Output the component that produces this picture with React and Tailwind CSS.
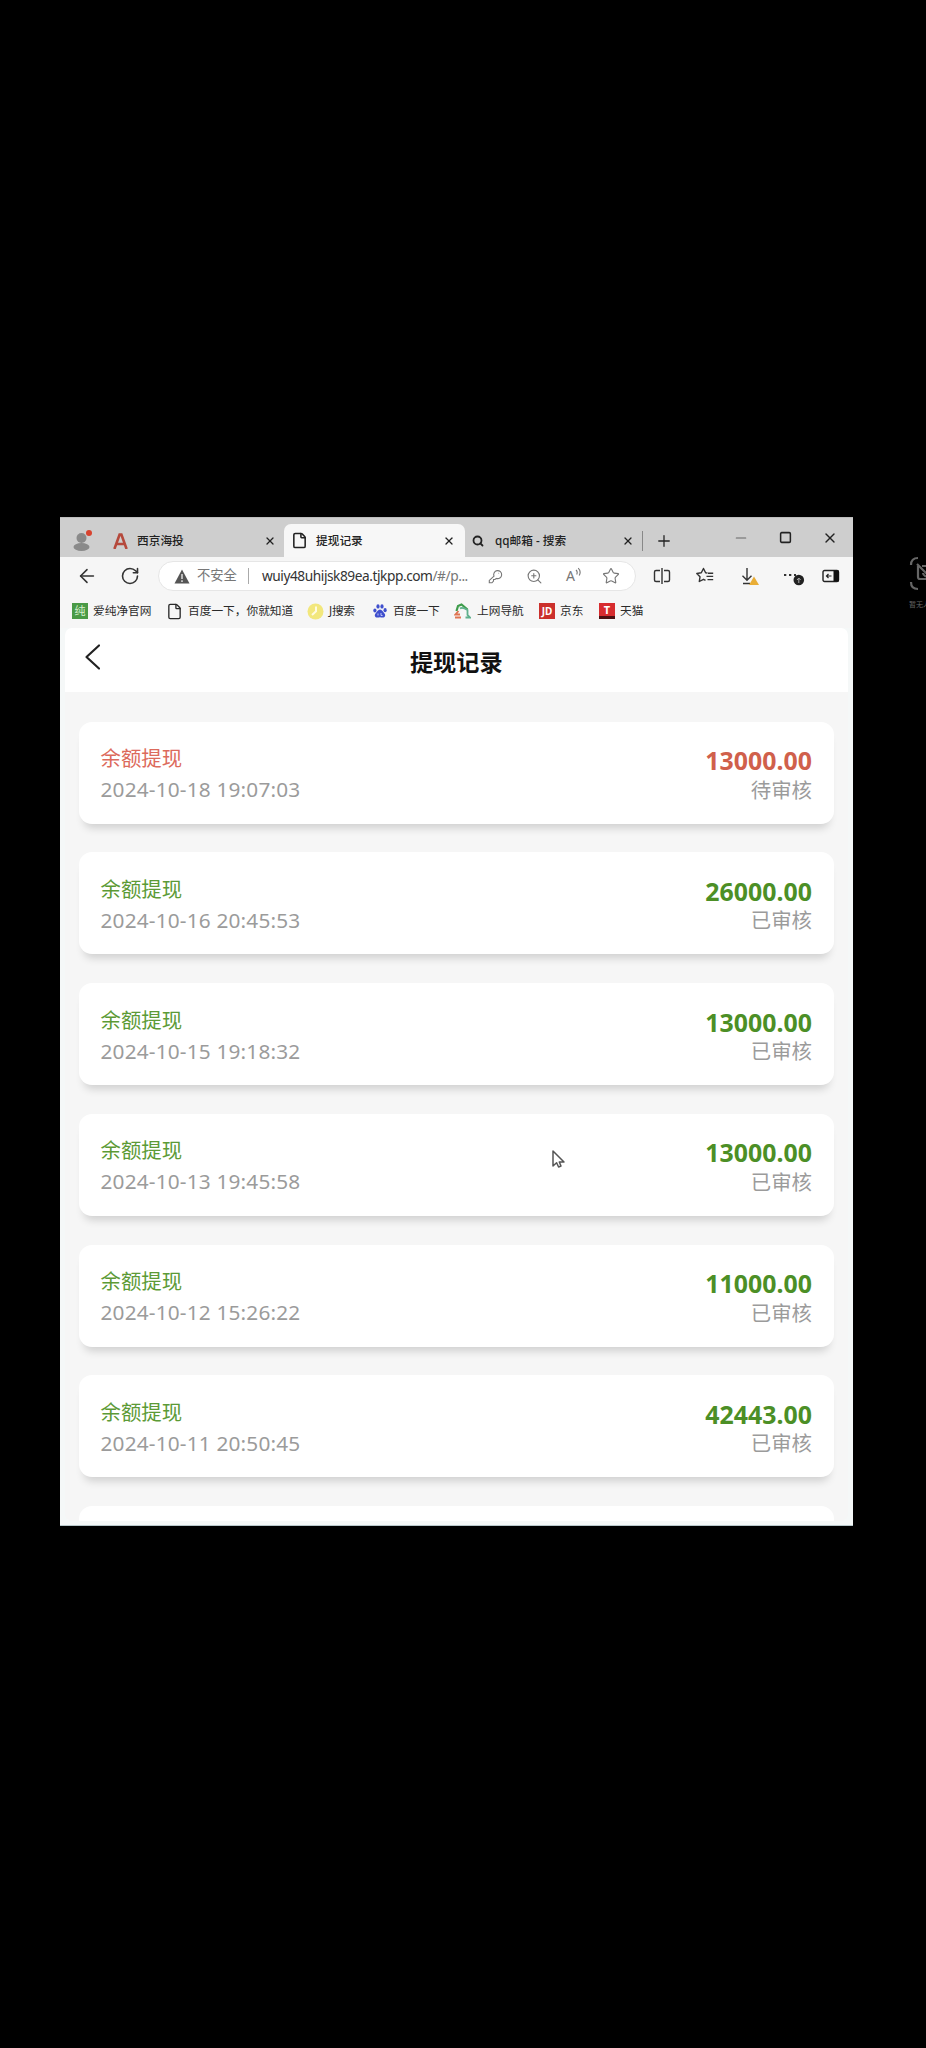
import {
  ArrowLeft,
  File,
  Minus,
  Plus,
  RotateCw,
  Search,
  Square,
  Star,
  X,
  ZoomIn,
} from "lucide-react";

const records = [
  { time: "2024-10-18 19:07:03", amount: "13000.00", pending: true },
  { time: "2024-10-16 20:45:53", amount: "26000.00" },
  { time: "2024-10-15 19:18:32", amount: "13000.00" },
  { time: "2024-10-13 19:45:58", amount: "13000.00" },
  { time: "2024-10-12 15:26:22", amount: "11000.00" },
  { time: "2024-10-11 20:50:45", amount: "42443.00" },
];

function RecordCard({ record }) {
  return (
    <div className="h-[102px] shrink-0 rounded-[13px] bg-white px-[21.5px] pt-[20.5px] flex justify-between shadow-[0_9px_8px_-5px_rgba(0,0,0,0.16)]">
      <div>
        <p className={`text-[20.4px] leading-[32px] ${record.pending ? "text-[#dc6a5c]" : "text-[#5c9a36]"}`}>
          余额提现
        </p>
        <p className="-mt-px text-[20.8px] leading-[32px] tracking-[0.18px] text-[#9b9b9b] whitespace-nowrap">{record.time}</p>
      </div>
      <div className="text-right">
        <p className={`text-[24.9px] leading-[36px] font-bold ${record.pending ? "text-[#d0604b]" : "text-[#4c8f26]"}`}>
          {record.amount}
        </p>
        <p className="-mt-[0.5px] text-[20.4px] leading-[24px] text-[#9b9b9b]">
          {record.pending ? "待审核" : "已审核"}
        </p>
      </div>
    </div>
  );
}

function TabBar() {
  return (
    <div className="h-10 bg-[#cecece] flex items-end text-[11.7px] text-[#222] border-t border-[#bdbdbd]">
      <div className="w-[224px] h-[33px] flex items-center pl-[13px]">
        <svg className="w-[19px] h-[22px] shrink-0" viewBox="0 0 19 22">
          <circle cx="8.5" cy="8" r="5" fill="#8a8a8a" />
          <ellipse cx="8.5" cy="17" rx="8" ry="4" fill="#8a8a8a" />
          <circle cx="16" cy="3" r="3" fill="#d8432f" />
        </svg>
        <svg className="w-[15px] h-[16px] ml-[21px] shrink-0" viewBox="0 0 15 16" fill="none" stroke="#b5493c" strokeWidth="2.6">
          <path d="M1.4 16 6.6 1.6h1.8L13.600 16M4 11h7" />
        </svg>
        <span className="ml-[9px] w-[127px] font-medium">西京海投</span>
        <X size={12} strokeWidth={2.6} className="shrink-0" />
      </div>
      <div className="w-[181px] h-[33px] rounded-t-[7px] bg-[#f7f7f7] flex items-center pl-[7px]">
        <File size={17} strokeWidth={2.2} className="shrink-0" />
        <span className="ml-[8px] w-[127px] font-medium">提现记录</span>
        <X size={12} strokeWidth={2.6} />
      </div>
      <div className="w-[178px] h-[33px] flex items-center pl-[7px]">
        <Search size={12} strokeWidth={3.6} className="shrink-0" />
        <span className="ml-[11px] w-[127px] font-medium whitespace-nowrap">qq邮箱 - 搜索</span>
        <X size={12} strokeWidth={2.6} className="shrink-0" />
        <span className="ml-[8px] w-px h-5 bg-[#888] shrink-0" />
      </div>
      <div className="h-[33px] flex items-center pl-[12px]">
        <Plus size={18} strokeWidth={1.7} />
      </div>
      <div className="h-full flex items-center pl-[60px]">
        <Minus size={16} strokeWidth={1.8} className="text-[#666]" />
        <Square size={13} strokeWidth={2.8} className="ml-[30px]" />
        <X size={16} strokeWidth={2} className="ml-[30px]" />
      </div>
    </div>
  );
}

function AddressBar() {
  return (
    <div className="h-[38px] flex items-center text-[#333]">
      <ArrowLeft size={22} strokeWidth={1.7} className="ml-[16px] shrink-0" />
      <RotateCw size={20} strokeWidth={1.9} className="ml-[22px] shrink-0" />
      <div className="ml-[18px] w-[478px] h-[30px] shrink-0 rounded-full bg-white border border-[#e6e6e6] flex items-center text-[#777]">
        <svg className="ml-[15px] w-[16px] h-[15px]" viewBox="0 0 16 15">
          <path d="M8 .5 15.5 14.5H.5Z" fill="#555" />
          <path d="M8 5v5M8 11.3v1.7" stroke="#ddd" strokeWidth="1.5" />
        </svg>
        <span className="ml-[7px] w-[41px] text-[13.3px] whitespace-nowrap">不安全</span>
        <span className="ml-[10px] w-px h-4 bg-[#aaa]" />
        <span className="ml-[13px] w-[217px] text-[13.7px] tracking-[-0.44px] whitespace-nowrap">
          <span className="text-[#333]">wuiy48uhijsk89ea.tjkpp.com</span>/#/p...
        </span>
        <svg className="ml-[9px] w-[15px] h-[15px]" viewBox="0 0 15 15" fill="none" stroke="currentColor" strokeWidth="1.1">
          <path d="M6 7.2a4 4 0 1 1 2.4 2.2L7 10.5H5.5V12L4 13.8H1.3v-2.4Z" />
          <path d="M10.5 4.2h.6" />
        </svg>
        <ZoomIn size={17} strokeWidth={1.6} className="ml-[23px]" />
        <span className="ml-[23px] text-[14px] leading-none">A</span>
        <svg className="w-[7px] h-[12px] mb-[6px]" viewBox="0 0 7 12" fill="none" stroke="currentColor" strokeWidth="1.1">
          <path d="M1 3c1.3 1.2 1.5 2.8.7 4.4M3.2 1.2c2.1 2 2.4 4.8 1 7.4" />
        </svg>
        <Star size={18} strokeWidth={1.5} className="ml-[20px]" />
      </div>
      <svg className="ml-[17px] w-[18px] h-[18px] shrink-0" viewBox="0 0 18 18" fill="none" stroke="currentColor" strokeWidth="1.4">
        <path d="M7 3.5H3a1.5 1.5 0 0 0-1.5 1.5v8A1.5 1.5 0 0 0 3 14.5h4M11 3.5h4A1.5 1.5 0 0 1 16.5 5v8a1.5 1.5 0 0 1-1.5 1.5h-4M9 1v16" />
      </svg>
      <svg className="ml-[25px] w-[18px] h-[18px] shrink-0" viewBox="0 0 18 18" fill="none" stroke="currentColor" strokeWidth="1.4" strokeLinejoin="round">
        <path d="M11.5 6 9.6 5.7 7.5 1.5 5.3 5.8.8 6.5 4 9.8 3.3 14.5 7.5 12.3 9.5 13.3M12 6.2h5.2M10.5 9.4h6.700M11.500 12.600h5.700" />
      </svg>
      <svg className="ml-[26px] w-[20px] h-[20px] shrink-0" viewBox="0 0 20 20" fill="none" stroke="currentColor" strokeWidth="1.4">
        <path d="M7 2v12M2.500 9.800 7 14.300l4.500-4.500M3 17.500h7" />
        <path d="M14 10.500 19 19h-10Z" fill="#e9ad35" stroke="none" />
      </svg>
      <svg className="ml-[23px] w-[22px] h-[20px] shrink-0" viewBox="0 0 22 20">
        <path d="M1 9h2.300M6 9h2.300M11 9h2" stroke="currentColor" strokeWidth="2" />
        <circle cx="15.800" cy="14" r="5.300" fill="#222" />
        <path d="M15.800 17v-5m-1.800 2 1.800-2 1.800 2" fill="none" stroke="#aaa" strokeWidth="1" />
      </svg>
      <svg className="ml-[17px] w-[18px] h-[14px] shrink-0" viewBox="0 0 18 14">
        <rect x="1" y="1.500" width="15.500" height="11" rx="1.500" fill="none" stroke="#222" strokeWidth="1.400" />
        <path d="M11.500 1.500h4.500a1 1 0 0 1 1 1v9a1 1 0 0 1-1 1h-4.500Z" fill="#111" />
        <path d="M9.500 7h-5m2-2-2 2 2 2" fill="none" stroke="#222" strokeWidth="1.200" />
      </svg>
    </div>
  );
}

function BookmarksBar() {
  return (
    <div className="h-[33px] flex items-center text-[11.7px] text-[#2a2a2a] whitespace-nowrap pb-px">
      <span className="ml-[12px] w-4 h-4 bg-[#4a9a46] text-[#d8f0cf] text-[11px] leading-[15px] text-center">纯</span>
      <span className="ml-[5px] w-[59px]">爱纯净官网</span>
      <File size={17} strokeWidth={1.9} className="ml-[14px] shrink-0" />
      <span className="ml-[5px] w-[105px]">百度一下，你就知道</span>
      <svg className="ml-[14px] w-[17px] h-[17px] shrink-0" viewBox="0 0 17 17">
        <circle cx="8.5" cy="8.5" r="8" fill="#f2e77c" />
        <path d="M9 3.5v4.800L5 12" fill="none" stroke="#fffbe0" strokeWidth="2" />
      </svg>
      <span className="ml-[5px] w-[28px] tracking-[-0.3px]">J搜索</span>
      <svg className="ml-[16px] w-[14px] h-[14px] shrink-0" viewBox="0 0 14 14" fill="#3f4fcd">
        <ellipse cx="1.900" cy="6.500" rx="1.600" ry="2.100" />
        <ellipse cx="5" cy="2.400" rx="1.600" ry="2.200" />
        <ellipse cx="9" cy="2.400" rx="1.600" ry="2.200" />
        <ellipse cx="12.100" cy="6.200" rx="1.600" ry="2.100" />
        <path d="M7 5.500c2 0 2.800 2.300 4.300 3.700 1.700 1.700.8 4.400-1.600 4.400-1 0-1.700-.4-2.700-.4s-1.700.4-2.700.4c-2.400 0-3.300-2.700-1.600-4.400C4.200 7.800 5 5.500 7 5.500Z" />
        <path d="M5 9.500v2M8 9v2.500h1.600" fill="none" stroke="#dfe2ff" strokeWidth=".8" />
      </svg>
      <span className="ml-[6px] w-[47px]">百度一下</span>
      <svg className="ml-[14px] w-[17px] h-[16px] shrink-0" viewBox="0 0 17 16" fill="none" strokeWidth="2.2">
        <path d="M2.500 8 4 3l3.500-1.500L13.500 6.500" stroke="#3e9d4b" />
        <path d="M6 5.500c2-1.500 5 0 7.500 1.500v5l2.500 2.500h-4.500" stroke="#5fb08c" strokeWidth="1.800" />
        <path d="M4.500 8 1.500 11.500h4.500M1 14.500h6" stroke="#df7552" strokeWidth="1.800" />
      </svg>
      <span className="ml-[6px] w-[47px]">上网导航</span>
      <span className="ml-[15px] w-4 h-4 bg-[#cb302c] text-white text-[10px] leading-4 font-bold text-center">JD</span>
      <span className="ml-[5px] w-[24px]">京东</span>
      <span className="ml-[15px] w-4 h-4 bg-[#d72c2f] border-b-[3px] border-[#4c1012] text-white text-[11px] leading-[13px] font-bold text-center">T</span>
      <span className="ml-[5px]">天猫</span>
    </div>
  );
}

export default function App() {
  return (
    <div className="relative w-full h-[2048px] overflow-hidden bg-black pt-[517px] pl-[60px] font-['Noto_Sans','Noto_Sans_CJK_SC',sans-serif]">
      {/* Browser window */}
      <div className="w-[792.5px] h-[1009px] bg-[#f6f6f6] flex flex-col border-b border-[#b9c8cb]">
        <TabBar />
        <AddressBar />
        <BookmarksBar />

        {/* Page */}
        <div className="flex-1 min-h-0 px-[4.5px] pb-[4px] bg-[#f5f8f8]">
          <div className="h-full overflow-hidden rounded-[7px] bg-[#f6f6f6] flex flex-col">
            <header className="h-[64px] shrink-0 bg-white flex items-center pl-[19px]">
              <svg className="w-[18px] h-[28px] mb-[6px] shrink-0" viewBox="0 0 18 28" fill="none" stroke="#222" strokeWidth="2.2" strokeLinecap="round" strokeLinejoin="round">
                <path d="M15 2.500 2.500 14 15 25.500" />
              </svg>
              <h1 className="flex-1 text-center text-[23.2px] font-bold text-[#111] pr-[37px] pt-[4px]">提现记录</h1>
            </header>
            <div className="flex-1 min-h-0 overflow-hidden px-[14.5px] pt-[29.5px] flex flex-col gap-[28.8px]">
              {records.map((record) => (
                <RecordCard key={record.time} record={record} />
              ))}
              <div className="h-[102px] shrink-0 rounded-[13px] bg-white" />
            </div>
          </div>
        </div>
      </div>

      {/* Mouse pointer */}
      <svg className="absolute left-[551px] top-[1149px] w-[15px] h-[20px]" viewBox="0 0 15 20">
        <path d="M2 2v15l3.600-3.200 2 4.200 2.400-1-1.700-4h4.700Z" fill="#fff" stroke="#555" strokeWidth="1.500" strokeLinejoin="round" />
      </svg>

      {/* Edge control */}
      <div className="absolute left-[909px] top-[556px] w-[40px] text-[#666]">
        <svg className="w-[36px] h-[36px]" viewBox="0 0 36 36" fill="none" stroke="currentColor" strokeWidth="2.2">
          <path d="M9 2C4.500 2 2 4.500 2 9M2 26c0 4.500 2.500 7 7 7" />
          <path d="M9 10v11a2 2 0 0 0 2 2h13M13 10h11M8 8l14 14M14 17a4 4 0 0 0 6 3" />
        </svg>
        <p className="mt-[8px] text-[7px] leading-[10px] whitespace-nowrap">暂无人脸</p>
      </div>
    </div>
  );
}
